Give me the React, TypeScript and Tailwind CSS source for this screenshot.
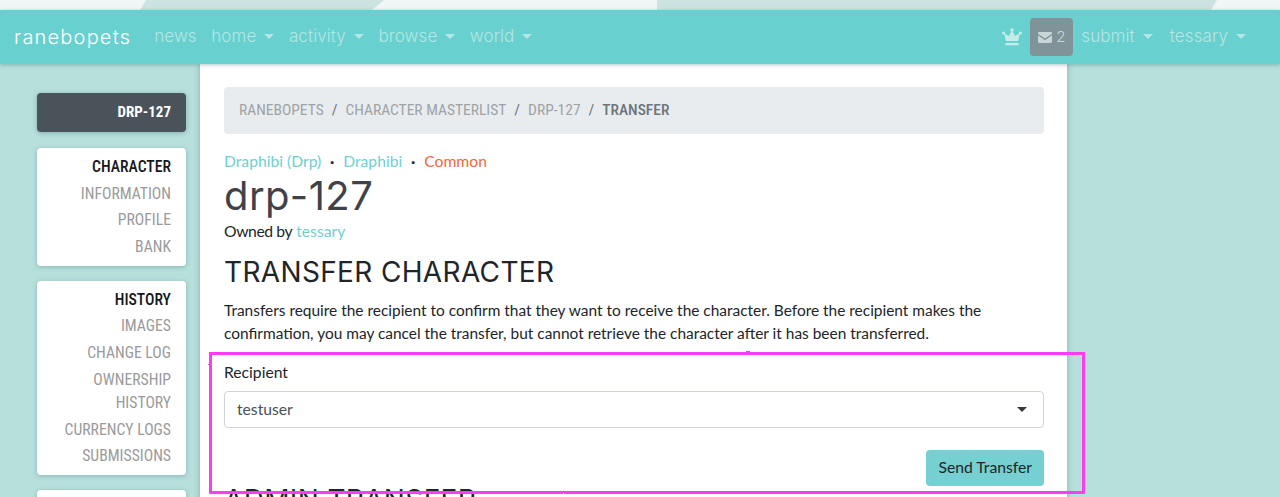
import React from "react";

const headingFont = "font-['Inter','Noto_Sans',sans-serif]";
const condensed = "font-['Roboto',sans-serif] [font-stretch:75%]";

const Caret = () => (
  <span className="ml-[8px] inline-block h-0 w-0 border-x-[5px] border-t-[5px] border-x-transparent border-t-current align-[3px]" />
);

const NavItem = ({ label, caret = true }: { label: string; caret?: boolean }) => (
  <a className="whitespace-nowrap text-[17px] tracking-[0.1px] text-[#b4e7e5]">
    {label}
    {caret && <Caret />}
  </a>
);

const SideLink = ({ label, head = false }: { label: string; head?: boolean }) => (
  <div className={`py-[1.85px] leading-[23px] ${head ? "font-medium text-[#16181b]" : "text-[#9a9a9a]"}`}>
    {label}
  </div>
);

const SidePanel = ({ items }: { items: string[] }) => (
  <div className="rounded-[4px] bg-white px-[15px] pb-[6.2px] pt-[5px] text-right text-[15.7px] uppercase shadow-[0_1px_5px_rgba(0,60,60,0.25)]">
    {items.map((item, i) => (
      <SideLink key={item} label={item} head={i === 0} />
    ))}
  </div>
);

const Crumb = ({ label, last = false }: { label: string; last?: boolean }) => (
  <>
    <span className={last ? "font-medium text-[#6c757d]" : "text-[#9ea3a7]"}>{label}</span>
    {!last && <span className="px-[8px] text-[#6c757d]">/</span>}
  </>
);

const Dot = () => <span className="w-[22px] text-center font-bold text-[#212529]">·</span>;

export default function App() {
  return (
    <div className="relative h-[497px] w-[1280px] overflow-hidden bg-[#b7e0dc] font-['Lato',sans-serif] text-[15.7px] text-[#212529]">
      <div className="h-[10px] bg-[#f0f6f6]">
        <svg width="1280" height="10" className="block">
          <polygon points="146,0 384,0 372,10 140,10" fill="#cde3e1" />
          <polygon points="657,0 1217,0 1211,10 657,10" fill="#cde3e1" />
        </svg>
      </div>

      <nav className="relative z-10 flex h-[54px] items-center bg-[#68d0ce] pl-[14px] pr-[34px] font-['Inter',sans-serif] font-light shadow-[0_1px_4px_rgba(0,80,80,0.3)]">
        <span className="mr-[23px] text-[20px] tracking-[1.2px] text-white">ranebopets</span>
        <div className="flex gap-[14.5px]">
          <NavItem label="news" caret={false} />
          <NavItem label="home" />
          <NavItem label="activity" />
          <NavItem label="browse" />
          <NavItem label="world" />
        </div>
        <div className="ml-auto flex items-center gap-[15px]">
          <svg width="20" height="18" viewBox="0 0 20 18" fill="#c6ecea" className="mr-[-7px]">
            <circle cx="10" cy="2" r="1.8" />
            <circle cx="1.6" cy="5" r="1.5" />
            <circle cx="18.4" cy="5" r="1.5" />
            <path d="M10 2.5l3.2 5.5L18 5.2 16 13H4L2 5.2 6.8 8z" />
            <rect x="3.5" y="15" width="13" height="2.2" rx="0.5" />
          </svg>
          <div className="mr-[-7px] flex h-[38px] w-[43px] items-center justify-center gap-[4px] rounded-[4px] bg-[#7f9399] text-[15px] text-[#c9d6d8]">
            <svg width="14" height="11" viewBox="0 0 13 10" fill="currentColor">
              <path d="M0 1a1 1 0 011-1h11a1 1 0 011 1v.5L6.5 6 0 1.5z" />
              <path d="M0 3l6.5 4.5L13 3v6a1 1 0 01-1 1H1a1 1 0 01-1-1z" />
            </svg>
            2
          </div>
          <span className="mr-[2px]">
            <NavItem label="submit" />
          </span>
          <NavItem label="tessary" />
        </div>
      </nav>

      <div className="flex">
        <aside className={`w-[200px] pl-[37px] pr-[14px] pt-[29px] ${condensed}`}>
          <div className="mb-[16px] flex h-[39px] items-center justify-end rounded-[4px] bg-[#4a5359] px-[15px] text-[15px] font-bold text-white shadow-[0_1px_5px_rgba(0,60,60,0.3)]">
            DRP-127
          </div>
          <div className="flex flex-col gap-[15px]">
            <SidePanel items={["Character", "Information", "Profile", "Bank"]} />
            <SidePanel items={["History", "Images", "Change Log", "Ownership History", "Currency Logs", "Submissions"]} />
            <SidePanel items={["Settings", "Transfer"]} />
          </div>
        </aside>

        <main className="h-[500px] w-[867px] bg-white pl-[24px] pr-[23px] pt-[23px] shadow-[0_0_6px_rgba(0,60,60,0.3)]">
          <div className={`flex h-[47px] items-center rounded-[4px] bg-[#e9ecef] px-[15px] text-[15.5px] uppercase ${condensed}`}>
            <Crumb label="Ranebopets" />
            <Crumb label="Character Masterlist" />
            <Crumb label="DRP-127" />
            <Crumb label="Transfer" last />
          </div>

          <div className="mt-[16px] flex h-[23px] items-center text-[#6fd0d1]">
            <span>Draphibi (Drp)</span>
            <Dot />
            <span>Draphibi</span>
            <Dot />
            <span className="text-[#f2683c]">Common</span>
          </div>
          <h1 className={`h-[46px] text-[40px] font-normal leading-[46px] tracking-[0.4px] text-[#3f4348] ${headingFont}`}>drp-127</h1>
          <div className="mt-[1px] h-[23px] leading-[23px]">
            <span className="tracking-[-0.4px]">Owned by</span> <span className="text-[#6fd0d1]">tessary</span>
          </div>
          <h2 className={`mt-[12px] h-[34px] text-[28px] font-normal leading-[34px] tracking-[0.35px] text-[#212529] ${headingFont}`}>TRANSFER CHARACTER</h2>
          <p className="mt-[10px] text-[15.45px] leading-[23px]">
            Transfers require the recipient to confirm that they want to receive the character. Before the recipient makes the confirmation, you may cancel the transfer, but cannot retrieve the character after it has been transferred.
          </p>

          <label className="mt-[16px] block leading-[23px]">Recipient</label>
          <div className="mt-[7px] flex h-[37px] items-center justify-between rounded-[4px] border border-[#ced4da] px-[12px] text-[#495057]">
            <span>testuser</span>
            <span className="mr-[4px] h-0 w-0 border-x-[5px] border-t-[5px] border-x-transparent border-t-[#343a40]" />
          </div>
          <div className="mt-[22px] flex justify-end">
            <button className="h-[36px] rounded-[4px] bg-[#76cfd1] px-[12px] text-[#212529]">Send Transfer</button>
          </div>
          <h2 className={`mt-[-3px] text-[28px] font-normal leading-[34px] tracking-[0.35px] text-[#212529] ${headingFont}`}>ADMIN TRANSFER</h2>
        </main>
      </div>

      {/* hand-drawn annotation box */}
      <svg width="884" height="150" className="pointer-events-none absolute left-[205px] top-[348px] z-20">
        <filter id="wobble">
          <feTurbulence type="fractalNoise" baseFrequency="0.08" numOctaves="2" seed="3" />
          <feDisplacementMap in="SourceGraphic" scale="1.5" />
        </filter>
        <rect x="5.5" y="5.5" width="873" height="139" fill="none" stroke="#ff3df0" strokeWidth="3" filter="url(#wobble)" />
      </svg>
    </div>
  );
}
